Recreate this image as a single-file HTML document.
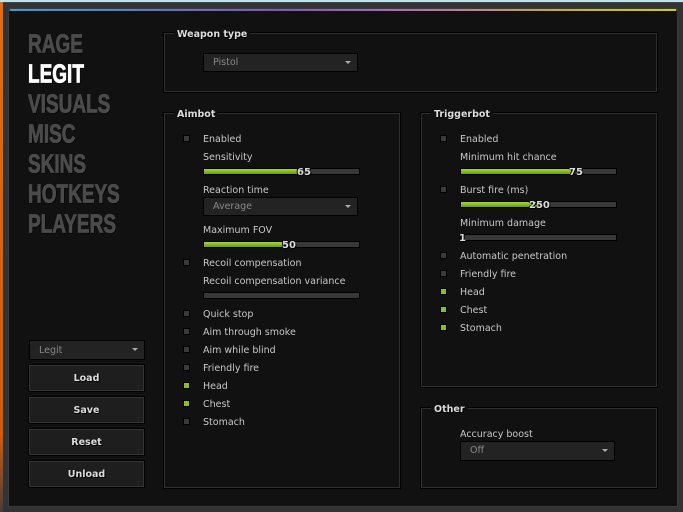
<!DOCTYPE html>
<html><head><style>
*{margin:0;padding:0;box-sizing:border-box}
body{width:683px;height:512px;overflow:hidden;background:#2e2e2e;position:relative;font-family:"DejaVu Sans","Liberation Sans",sans-serif}
.a{position:absolute}
#strip{left:0;top:0;width:3px;height:512px;background:linear-gradient(#e86a10,#d85a08 85%,#4a3a38)}
#top{left:0;top:0;width:683px;height:2px;background:#bfe4ee}
#frame{left:3px;top:2px;width:680px;height:510px;background:#333;border-top:1px solid #444}
#inner{left:8px;top:8px;width:670px;height:499px;background:#3b3b3b}
#dark{left:9px;top:11px;width:668px;height:495px;background:#111}
#grad{left:10px;top:9px;width:666px;height:2px;background:linear-gradient(90deg,#3aa0c8,#7a5ab8 40%,#b070b0 60%,#c8b040 85%,#c8d020)}
.nav{left:28px;font-family:"Liberation Sans","DejaVu Sans",sans-serif;font-weight:bold;font-size:25px;color:#4b4b4b;transform:scale(0.76,1.05);transform-origin:0 50%;letter-spacing:0;line-height:30px;text-shadow:1px 1px 0 #000;-webkit-text-stroke:0.8px currentColor}
.box{border:1px solid #2f2f2f;outline:1px solid #000}
.title{font-size:9.5px;font-weight:bold;color:#ddd;background:#111;padding:0 3px;text-shadow:1px 1px 0 #000;line-height:12px;margin-top:2px}
.lbl{font-size:9.5px;color:#c8c8c8;line-height:12px;margin-top:2px}
.cb{width:7px;height:7px;background:#3a3a3a;border:1px solid #000}
.cb.on{background:#8cc020}
.sl{height:7px;background:#383838;border:1px solid #000}
.fill{position:absolute;left:0;top:0;height:5px;background:linear-gradient(#a6d832,#6e9a12)}
.val{position:absolute;top:-2px;font-size:10px;font-weight:bold;color:#ddd;text-shadow:1px 1px 0 #000,-1px 0 0 #000;line-height:12px}
.dd{background:#232323;border:1px solid #000;font-size:9.5px;color:#888;padding-left:9px;line-height:18px}
.dd:after{content:"";position:absolute;right:6px;top:7px;border-left:3px solid transparent;border-right:3px solid transparent;border-top:3px solid #aaa}
.btn{left:29px;width:115px;height:26px;background:#1e1e1e;border:1px solid #333;outline:1px solid #000;font-size:9.5px;font-weight:bold;color:#ddd;text-align:center;line-height:26px;text-shadow:1px 1px 0 #000}
</style></head><body>
<div class="a" id="frame"></div><div class="a" id="strip"></div><div class="a" id="top"></div>
<div class="a" id="inner"></div><div class="a" id="dark"></div><div class="a" id="grad"></div>

<div class="a nav" style="top:29px">RAGE</div>
<div class="a nav" style="top:59px;color:#fff">LEGIT</div>
<div class="a nav" style="top:89px">VISUALS</div>
<div class="a nav" style="top:119px">MISC</div>
<div class="a nav" style="top:149px">SKINS</div>
<div class="a nav" style="top:179px">HOTKEYS</div>
<div class="a nav" style="top:209px">PLAYERS</div>

<div class="a dd" style="left:29px;top:340px;width:116px;height:20px;line-height:20px">Legit</div>
<div class="a btn" style="top:365px">Load</div>
<div class="a btn" style="top:397px">Save</div>
<div class="a btn" style="top:429px">Reset</div>
<div class="a btn" style="top:461px">Unload</div>

<!-- weapon type -->
<div class="a box" style="left:164px;top:33px;width:493px;height:59px"></div>
<div class="a title" style="left:174px;top:27px">Weapon type</div>
<div class="a dd" style="left:203px;top:53px;width:155px;height:19px">Pistol</div>

<!-- aimbot -->
<div class="a box" style="left:164px;top:113px;width:236px;height:375px"></div>
<div class="a title" style="left:174px;top:107px">Aimbot</div>
<div class="a cb" style="left:183px;top:135px"></div><div class="a lbl" style="left:203px;top:132px">Enabled</div>
<div class="a lbl" style="left:203px;top:150px">Sensitivity</div>
<div class="a sl" style="left:203px;top:168px;width:157px"><div class="fill" style="width:93px"></div><div class="val" style="left:93px">65</div></div>
<div class="a lbl" style="left:203px;top:183px">Reaction time</div>
<div class="a dd" style="left:203px;top:197px;width:155px;height:19px">Average</div>
<div class="a lbl" style="left:203px;top:223px">Maximum FOV</div>
<div class="a sl" style="left:203px;top:241px;width:157px"><div class="fill" style="width:78px"></div><div class="val" style="left:78px">50</div></div>
<div class="a cb" style="left:183px;top:259px"></div><div class="a lbl" style="left:203px;top:256px">Recoil compensation</div>
<div class="a lbl" style="left:203px;top:274px">Recoil compensation variance</div>
<div class="a sl" style="left:203px;top:292px;width:157px"></div>
<div class="a cb" style="left:183px;top:310px"></div><div class="a lbl" style="left:203px;top:307px">Quick stop</div>
<div class="a cb" style="left:183px;top:328px"></div><div class="a lbl" style="left:203px;top:325px">Aim through smoke</div>
<div class="a cb" style="left:183px;top:346px"></div><div class="a lbl" style="left:203px;top:343px">Aim while blind</div>
<div class="a cb" style="left:183px;top:364px"></div><div class="a lbl" style="left:203px;top:361px">Friendly fire</div>
<div class="a cb on" style="left:183px;top:382px"></div><div class="a lbl" style="left:203px;top:379px">Head</div>
<div class="a cb on" style="left:183px;top:400px"></div><div class="a lbl" style="left:203px;top:397px">Chest</div>
<div class="a cb" style="left:183px;top:418px"></div><div class="a lbl" style="left:203px;top:415px">Stomach</div>

<!-- triggerbot -->
<div class="a box" style="left:421px;top:113px;width:236px;height:274px"></div>
<div class="a title" style="left:431px;top:107px">Triggerbot</div>
<div class="a cb" style="left:440px;top:135px"></div><div class="a lbl" style="left:460px;top:132px">Enabled</div>
<div class="a lbl" style="left:460px;top:150px">Minimum hit chance</div>
<div class="a sl" style="left:460px;top:168px;width:157px"><div class="fill" style="width:110px"></div><div class="val" style="left:108px">75</div></div>
<div class="a cb" style="left:440px;top:186px"></div><div class="a lbl" style="left:460px;top:183px">Burst fire (ms)</div>
<div class="a sl" style="left:460px;top:201px;width:157px"><div class="fill" style="width:78px"></div><div class="val" style="left:68px">250</div></div>
<div class="a lbl" style="left:460px;top:216px">Minimum damage</div>
<div class="a sl" style="left:460px;top:234px;width:157px"><div class="val" style="left:-2px">1</div></div>
<div class="a cb" style="left:440px;top:252px"></div><div class="a lbl" style="left:460px;top:249px">Automatic penetration</div>
<div class="a cb" style="left:440px;top:270px"></div><div class="a lbl" style="left:460px;top:267px">Friendly fire</div>
<div class="a cb on" style="left:440px;top:288px"></div><div class="a lbl" style="left:460px;top:285px">Head</div>
<div class="a cb on" style="left:440px;top:306px"></div><div class="a lbl" style="left:460px;top:303px">Chest</div>
<div class="a cb on" style="left:440px;top:324px"></div><div class="a lbl" style="left:460px;top:321px">Stomach</div>

<!-- other -->
<div class="a box" style="left:421px;top:408px;width:236px;height:80px"></div>
<div class="a title" style="left:431px;top:402px">Other</div>
<div class="a lbl" style="left:460px;top:427px">Accuracy boost</div>
<div class="a dd" style="left:460px;top:441px;width:155px;height:20px">Off</div>
</body></html>
